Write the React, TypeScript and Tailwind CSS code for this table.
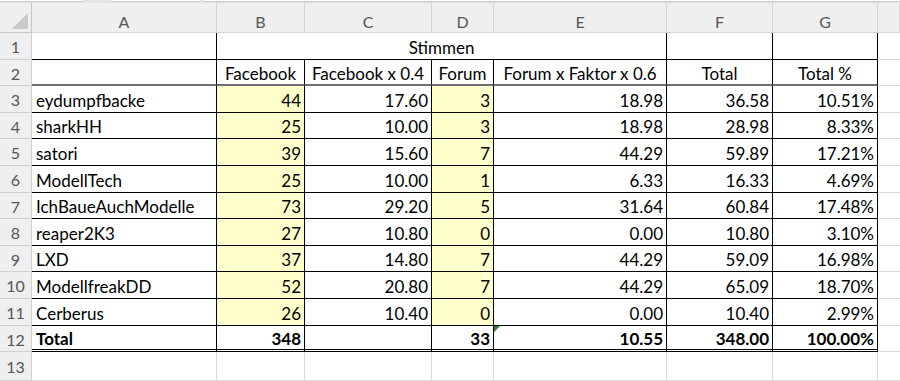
import React from "react";

type Cell = {
  t?: string;
  align?: "l" | "c" | "r";
  bold?: boolean;
  yellow?: boolean;
  span?: number;
  tri?: boolean;
};

const rowHeights = [27, 26, 27, 26, 27, 27, 26, 27, 26, 27, 27, 26, 29];

const people: [string, string, string, string, string, string, string][] = [
  ["eydumpfbacke", "44", "17.60", "3", "18.98", "36.58", "10.51%"],
  ["sharkHH", "25", "10.00", "3", "18.98", "28.98", "8.33%"],
  ["satori", "39", "15.60", "7", "44.29", "59.89", "17.21%"],
  ["ModellTech", "25", "10.00", "1", "6.33", "16.33", "4.69%"],
  ["IchBaueAuchModelle", "73", "29.20", "5", "31.64", "60.84", "17.48%"],
  ["reaper2K3", "27", "10.80", "0", "0.00", "10.80", "3.10%"],
  ["LXD", "37", "14.80", "7", "44.29", "59.09", "16.98%"],
  ["ModellfreakDD", "52", "20.80", "7", "44.29", "65.09", "18.70%"],
  ["Cerberus", "26", "10.40", "0", "0.00", "10.40", "2.99%"],
];

function buildRows(): Cell[][] {
  const rows: Cell[][] = [];
  rows.push([{}, { t: "Stimmen", align: "c", span: 4 }, {}, {}]);
  rows.push([
    {},
    { t: "Facebook", align: "c" },
    { t: "Facebook x 0.4", align: "c" },
    { t: "Forum", align: "c" },
    { t: "Forum x Faktor x 0.6", align: "c" },
    { t: "Total", align: "c" },
    { t: "Total %", align: "c" },
  ]);
  for (const p of people) {
    rows.push([
      { t: p[0], align: "l" },
      { t: p[1], align: "r", yellow: true },
      { t: p[2], align: "r" },
      { t: p[3], align: "r", yellow: true },
      { t: p[4], align: "r" },
      { t: p[5], align: "r" },
      { t: p[6], align: "r" },
    ]);
  }
  rows.push([
    { t: "Total", align: "l", bold: true },
    { t: "348", align: "r", bold: true },
    { t: "", align: "r" },
    { t: "33", align: "r", bold: true },
    { t: "10.55", align: "r", bold: true, tri: true },
    { t: "348.00", align: "r", bold: true },
    { t: "100.00%", align: "r", bold: true },
  ]);
  rows.push([{}, {}, {}, {}, {}, {}, {}]);
  return rows;
}

const colLetters = ["A", "B", "C", "D", "E", "F", "G", ""];

export default function App() {
  const rows = buildRows();
  return (
    <div
      className="w-[900px] h-[381px] overflow-hidden bg-white text-black"
      style={{ fontFamily: "Lato, 'Open Sans', sans-serif" }}
    >
      <div className="h-[3px] bg-[#e4e4e4] flex">
        <div className="w-[83px] h-[2px] bg-white border-b border-[#c8c8c8]" />
        <div className="w-[28px]" />
        <div className="w-[89px] h-[2px] bg-white border-b border-[#c8c8c8]" />
        <div className="w-[3px]" />
        <div className="flex-1 h-[2px] bg-white border-b border-[#c8c8c8]" />
      </div>
      <div className="grid grid-cols-[32px_185px_88px_127px_62px_173px_106px_105px_22px]">
        <div className="h-[30px] bg-[#efefef] border-r border-b border-[#c6c6c6] relative">
          <div className="absolute right-[3px] bottom-[3px] w-0 h-0 border-l-[16px] border-l-transparent border-b-[16px] border-b-[#c9c9c9]" />
        </div>
        {colLetters.map((c, i) => (
          <div
            key={i}
            className="h-[30px] bg-[#efefef] border-r border-b border-[#d4d4d4] flex items-center justify-center pt-[9px] text-[16px] leading-none text-[#555555]"
          >
            {c}
          </div>
        ))}
        {rows.map((row, r) => {
          const h = rowHeights[r];
          const rowNum = r + 1;
          const cells: React.ReactNode[] = [];
          cells.push(
            <div
              key="rh"
              style={{ height: h }}
              className="bg-[#efefef] border-r border-b border-[#d0d0d0] flex items-center justify-center pt-[2px] text-[16px] text-[#555555]"
            >
              {rowNum}
            </div>
          );
          let colIdx = 0;
          row.forEach((cell, ci) => {
            const span = cell.span ?? 1;
            const inTable = rowNum <= 12;
            let bClass = "border-b border-[#d9d9d9]";
            let rClass = "border-r border-r-[#d9d9d9]";
            if (inTable) {
              rClass = "border-r border-r-black";
              if (rowNum === 2) bClass = "border-b-2 border-b-[#6f6f6f]";
              else if (rowNum === 12) bClass = "border-b-[3px] border-double border-b-black";
              else bClass = "border-b border-b-black";
            }
            const align =
              cell.align === "c"
                ? "justify-center"
                : cell.align === "r"
                ? "justify-end pr-[3px]"
                : "justify-start pl-[4px]";
            cells.push(
              <div
                key={ci}
                style={{ height: h, gridColumn: span > 1 ? `span ${span} / span ${span}` : undefined }}
                className={`relative flex items-center whitespace-nowrap text-[17px] leading-none pt-[2px] ${align} ${bClass} ${rClass} ${
                  cell.yellow ? "bg-[#ffffcc]" : ""
                } ${cell.bold ? "font-bold" : ""}`}
              >
                {cell.tri && (
                  <div className="absolute left-0 top-0 w-0 h-0 border-t-[6px] border-t-[#2e7d32] border-r-[6px] border-r-transparent" />
                )}
                {cell.t}
              </div>
            );
            colIdx += span;
          });
          while (colIdx < 7) {
            cells.push(
              <div key={"f" + colIdx} style={{ height: h }} className="border-b border-r border-[#d9d9d9]" />
            );
            colIdx++;
          }
          cells.push(<div key="h" style={{ height: h }} className="border-b border-[#d9d9d9]" />);
          return <React.Fragment key={r}>{cells}</React.Fragment>;
        })}
      </div>
    </div>
  );
}
